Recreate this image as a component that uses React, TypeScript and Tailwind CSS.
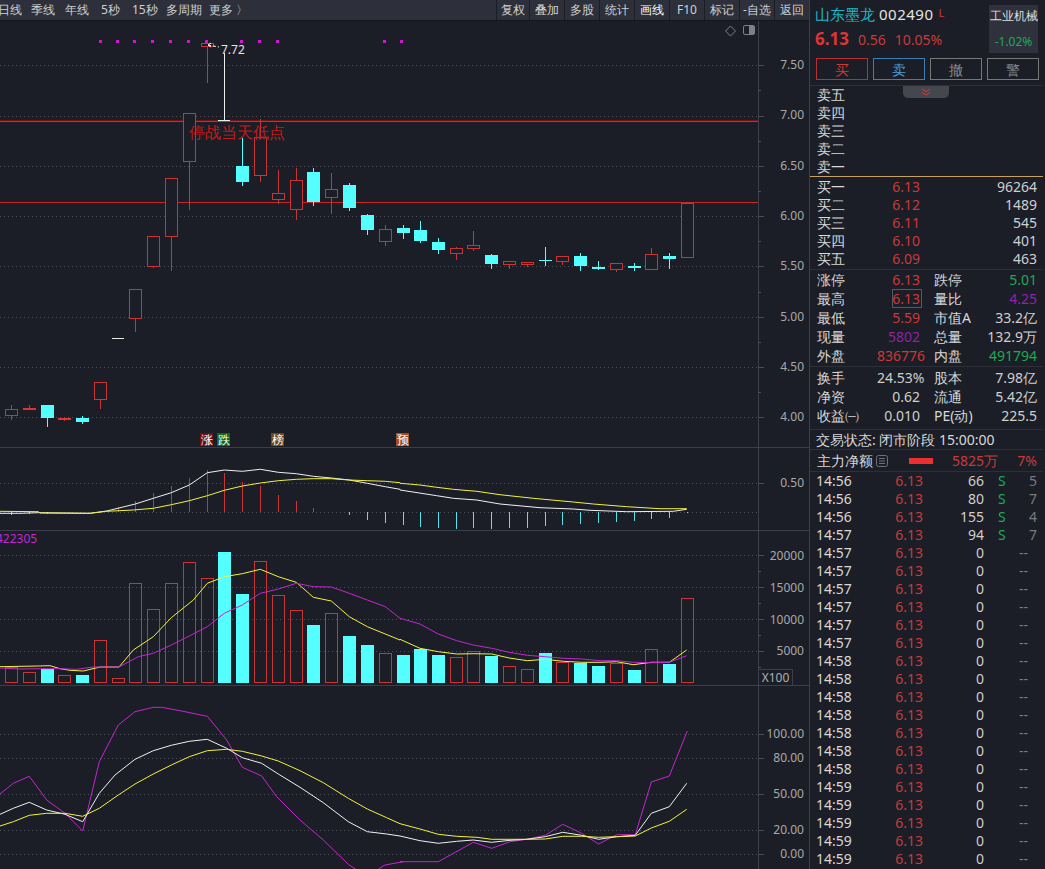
import React from "react";

type P = number[];
const pts = (a: P, ox: number, oy: number) => {
  const o: string[] = [];
  for (let i = 0; i < a.length; i += 2) o.push(`${(ox + a[i] / 3).toFixed(1)},${(oy + a[i + 1] / 3).toFixed(1)}`);
  return o.join(" ");
};
const join2 = (a: P, b: P, y: number, ax = 0) => pts(a, ax, y) + " " + pts(b, 400, y);

const RED = "#c93434";
const CYAN = "#54ffff";
const YEL = "#f2f23c";
const MAG = "#c426cf";

// x, high, bodyTop, bodyBottom, low, kind
const candles: [number, number, number, number, number, string][] = [
  [11, 405, 409, 416, 420, "r"], [29, 405, 408, 410, 410, "f"], [47, 405, 405, 418, 427, "c"], [64, 417, 418, 420, 421, "f"],
  [82, 416, 418, 422, 424, "c"], [100, 382, 382, 400, 409, "r"], [135, 289, 289, 319, 332, "r"], [153, 236, 236, 267, 268, "r"],
  [171, 178, 178, 237, 271, "r"], [189, 113, 113, 162, 210, "r"], [207, 43, 43, 47, 83, "r"], [242, 138, 166, 182, 186, "c"],
  [260, 119, 137, 176, 182, "r"], [278, 170, 193, 200, 204, "r"], [296, 168, 180, 210, 220, "r"], [313, 168, 172, 202, 206, "c"],
  [331, 173, 189, 198, 214, "r"], [349, 183, 185, 208, 211, "c"], [367, 214, 215, 230, 235, "c"], [385, 225, 229, 242, 246, "r"],
  [403, 225, 228, 233, 239, "c"], [420, 221, 230, 241, 243, "c"], [438, 238, 242, 250, 254, "c"], [456, 247, 248, 254, 260, "r"],
  [473, 231, 245, 249, 251, "r"], [491, 254, 255, 264, 269, "c"], [509, 261, 261, 265, 269, "r"], [527, 262, 262, 265, 267, "r"],
  [545, 247, 260, 261, 266, "c"], [562, 256, 256, 262, 265, "r"], [580, 253, 256, 266, 271, "c"], [598, 261, 267, 269, 270, "c"],
  [616, 263, 263, 270, 272, "r"], [634, 263, 266, 268, 271, "c"], [651, 248, 254, 270, 270, "r"], [669, 253, 256, 259, 269, "c"],
  [687, 203, 203, 258, 258, "r"],
];

const vol: [number, number, string][] = [
  [11, 712, "r"], [29, 727, "r"], [47, 717, "c"], [64, 736, "r"], [82, 735, "c"], [100, 631, "r"], [118, 745, "r"], [135, 460, "r"],
  [153, 538, "r"], [171, 460, "r"], [189, 397, "r"], [207, 445, "r"], [224, 366, "c"], [242, 492, "c"], [260, 394, "r"], [278, 496, "r"],
  [296, 541, "r"], [313, 585, "c"], [331, 550, "r"], [349, 618, "c"], [367, 645, "c"], [385, 670, "r"], [403, 675, "c"], [420, 657, "c"],
  [438, 675, "c"], [456, 680, "r"], [473, 664, "r"], [491, 678, "c"], [509, 709, "r"], [527, 718, "r"], [545, 669, "c"], [562, 695, "r"],
  [580, 699, "c"], [598, 708, "c"], [616, 700, "r"], [634, 720, "c"], [651, 658, "r"], [669, 702, "c"], [687, 505, "r"],
];

const macd: [number, number][] = [
  [118, 507], [135, 501], [153, 493], [171, 486], [189, 478], [207, 470], [224, 473], [242, 482], [260, 486], [278, 495], [296, 501], [313, 508], [331, 512],
  [349, 515], [367, 520], [385, 523], [403, 525], [420, 527], [438, 528], [456, 529], [473, 528], [491, 529], [509, 528], [527, 528], [545, 526], [562, 525],
  [580, 524], [598, 523], [616, 522], [634, 521], [651, 519], [669, 518], [687, 513], [11, 515], [29, 514], [47, 514],
];

const Grid = ({ ys }: { ys: number[] }) => (
  <>
    {ys.map((y) => (
      <line key={y} x1={0} x2={758} y1={y + 0.5} y2={y + 0.5} stroke="#4c4f58" strokeDasharray="1 3" />
    ))}
    {ys.map((y) => (
      <line key={"t" + y} x1={758} x2={764} y1={y + 0.5} y2={y + 0.5} stroke="#4a4d58" />
    ))}
  </>
);

const Minor = ({ ys }: { ys: number[] }) => (
  <>
    {ys.map((y) => (
      <line key={y} x1={758} x2={761} y1={y + 0.5} y2={y + 0.5} stroke="#4a4d58" />
    ))}
  </>
);

const Line = ({ p, c }: { p: string; c: string }) => <polyline points={p} fill="none" stroke={c} strokeWidth={1} />;

const Panel = ({ top, h, border = true, children }: { top: number; h: number; border?: boolean; children: React.ReactNode }) => (
  <div className={`relative w-full shrink-0 overflow-hidden ${border ? "border-b border-[#3c3f4a]" : ""}`} style={{ height: h }}>
    <div className="absolute left-[758px] top-0 bottom-0 w-px bg-[#3c3f4a]" />
    <svg className="absolute left-0 top-0" width={809} height={h} viewBox={`0 ${top} 809 ${h}`}>
      {children}
    </svg>
  </div>
);

const Ax = ({ y, t }: { y: number; t: string }) => (
  <div className="absolute right-[5px] h-4 text-[12px] leading-4 text-[#a9a9a9]" style={{ top: y - 7 }}>
    {t}
  </div>
);

const Mark = ({ x, t, c }: { x: number; t: string; c: string }) => (
  <div className={`absolute top-[412px] flex h-[13px] w-[13px] items-center justify-center text-[12px] leading-none text-white ${c}`} style={{ left: x }}>
    {t}
  </div>
);

const Tool = ({ t, w, bright }: { t: string; w: string; bright?: boolean }) => (
  <div className={`flex h-full items-center justify-center border-l border-[#1b1e26] text-[12px] ${w} ${bright ? "text-white" : "text-[#d0d0d0]"}`}>{t}</div>
);

const Act = ({ t, c }: { t: string; c: string }) => (
  <div className={`flex h-[22px] w-[52px] items-center justify-center border text-[14px] ${c}`}>{t}</div>
);

const Book = ({ l, p, v }: { l: string; p?: string; v?: string }) => (
  <div className="flex h-[18px] items-center text-[14px] leading-none">
    <span className="w-[60px] text-[#d8d8d8]">{l}</span>
    <span className="w-[43px] text-right text-[#c93a3a]">{p}</span>
    <span className="w-[117px] text-right text-[#cfcfcf]">{v}</span>
  </div>
);

const Stat = ({ a, b, ac = "text-[#c93a3a]", c, d, dc = "text-[#cfcfcf]", boxed }: { a: string; b: string; ac?: string; c: string; d: string; dc?: string; boxed?: boolean }) => (
  <div className="relative flex h-[19px] items-center text-[14px] leading-none">
    <span className="w-[60px] text-[#d8d8d8]">{a}</span>
    <span className={`w-[43px] text-right ${ac}`}>{b}</span>
    {boxed && <div className="absolute left-[75px] top-0 h-[19px] w-[30px] border border-[#555965]" />}
    <span className="ml-[14px] w-[50px] text-[#d8d8d8]">{c}</span>
    <span className={`w-[53px] text-right ${dc}`}>{d}</span>
  </div>
);

const times: string[][] = [
  ["14:56", "66", "S", "5"], ["14:56", "80", "S", "7"], ["14:56", "155", "S", "4"], ["14:57", "94", "S", "7"],
  ...[...Array(6).fill("14:57"), ...Array(7).fill("14:58"), ...Array(5).fill("14:59")].map((t: string) => [t, "0", "", "--"]),
];

export default function App() {
  return (
    <div className="flex h-[869px] w-[1045px] overflow-hidden bg-[#1b1e26] font-['Noto_Sans','Noto_Sans_CJK_SC',sans-serif] text-[12px]">
      <div className="flex w-[810px] shrink-0 flex-col border-r border-[#3c3f4a]">
        <div className="flex h-[21px] shrink-0 items-center justify-between border-b border-[#14161b] bg-[#2d303b] text-[#d0d0d0]">
          <div className="relative h-full w-[300px]">
            {[["日线", -2], ["季线", 31], ["年线", 65], ["5秒", 101], ["15秒", 132], ["多周期", 166], ["更多", 209], ["〉", 236]].map(([t, x]) => (
              <span key={t as string} className="absolute top-[1px] leading-[18px]" style={{ left: x as number }}>
                {t}
              </span>
            ))}
          </div>
          <div className="flex h-full">
            <Tool t="复权" w="w-[33px]" />
            <Tool t="叠加" w="w-[35px]" />
            <Tool t="多股" w="w-[35px]" />
            <Tool t="统计" w="w-[35px]" />
            <Tool t="画线" w="w-[35px]" bright />
            <Tool t="F10" w="w-[35px]" />
            <Tool t="标记" w="w-[35px]" />
            <Tool t="-自选" w="w-[35px]" />
            <Tool t="返回" w="w-[35px]" />
          </div>
        </div>

        <Panel top={21} h={427}>
          <Grid ys={[65, 116, 166, 216, 266, 317, 367, 417]} />
          <Minor ys={[90, 141, 191, 241, 292, 342, 392]} />
          <rect x={0} y={120} width={758} height={1} fill="#7a0f0f" />
          <rect x={0} y={121} width={758} height={1} fill="#d32a2a" />
          <rect x={0} y={202} width={758} height={1} fill="#c92424" />
          {[100, 117, 134, 152, 170, 188, 206, 241, 259, 277, 384, 401].map((x) => (
            <rect key={x} x={x - 1} y={40} width={3} height={3} fill="#d414d4" />
          ))}
          <g shapeRendering="crispEdges">
            {candles.map(([x, hi, t, b, lo, k]) => {
              const col = k === "c" ? CYAN : RED;
              return (
                <g key={x}>
                  <line x1={x + 0.5} x2={x + 0.5} y1={hi} y2={lo} stroke={col} />
                  {k === "r" ? (
                    <rect x={x - 5.5} y={t + 0.5} width={12} height={b - t - 1} fill="#1b1e26" stroke={col} />
                  ) : (
                    <rect x={x - 6} y={t} width={13} height={b - t} fill={k === "c" ? CYAN : "#e03434"} />
                  )}
                </g>
              );
            })}
            <line x1={112} x2={124} y1={338.5} y2={338.5} stroke="#e8e8e8" />
            <line x1={224.5} x2={224.5} y1={53} y2={120} stroke="#eeeeee" />
            <line x1={218} x2={230} y1={120.5} y2={120.5} stroke="#eeeeee" />
          </g>
          <path d="M211 43 L208 45 L211 47" fill="none" stroke="#fff" />
          <line x1={208} y1={45} x2={219} y2={47} stroke="#fff" strokeDasharray="3 2" />
        </Panel>
        <div className="pointer-events-none absolute left-0 top-0 h-[869px] w-[809px]">
          <span className="absolute left-[221px] top-[42px] text-[12px] leading-4 text-[#e4e4e4]">7.72</span>
          <span className="absolute left-[189px] top-[120px] text-[16px] leading-6 text-[#c21a1a]">停战当天低点</span>
          <span className="absolute left-[-4px] top-[531px] text-[12px] leading-4 text-[#c426cf]">422305</span>
          {[["7.50", 64], ["7.00", 114], ["6.50", 165], ["6.00", 215], ["5.50", 265], ["5.00", 316], ["4.50", 366], ["4.00", 416], ["0.50", 482], ["20000", 555], ["15000", 587], ["10000", 619], ["5000", 650], ["100.00", 733], ["80.00", 757], ["50.00", 793], ["20.00", 829], ["0.00", 853]].map(([t, y]) => (
            <Ax key={t as string} t={t as string} y={y as number} />
          ))}
          <div className="absolute left-[758px] top-[669px] flex h-[17px] w-[35px] items-center justify-center border border-[#3c3f4a] text-[12px] text-[#b0b0b0]">X100</div>
          <div className="absolute left-0 top-[21px]">
            <Mark x={200} t="涨" c="bg-[#6e0f14]" />
            <Mark x={217} t="跌" c="bg-[#0e6a1c]" />
            <Mark x={271} t="榜" c="bg-[#744615]" />
            <Mark x={396} t="预" c="bg-[#a34e1e]" />
          </div>
          <svg className="absolute left-[725px] top-[24px]" width={32} height={14} viewBox="0 0 32 14">
            <path d="M5 2 L10 7 L5 12 L0 7 Z" fill="none" stroke="#7d808a" transform="translate(0.5 0)" />
            <rect x={18.5} y={1.5} width={11} height={9} rx={1.5} fill="none" stroke="#7d808a" />
            <rect x={24} y={2} width={5} height={8} fill="#7d808a" />
          </svg>
        </div>

        <Panel top={448} h={83}>
          <line x1={0} x2={758} y1={512.5} y2={512.5} stroke="#4c4f58" strokeDasharray="1 3" />
          <line x1={758} x2={764} y1={483.5} y2={483.5} stroke="#4a4d58" />
          <line x1={0} x2={758} y1={483.5} y2={483.5} stroke="#4c4f58" strokeDasharray="1 3" />
          <g shapeRendering="crispEdges">
            {macd.map(([x, y]) => (
              <line key={x} x1={x + 0.5} x2={x + 0.5} y1={512} y2={y} stroke={y < 512 ? RED : "#54e4e8"} />
            ))}
          </g>
          <Line c="#f0f0f0" p={join2([0, 250, 60, 250, 115, 248, 270, 250, 320, 243, 406, 222, 460, 205, 514, 188, 568, 165, 622, 128, 673, 120, 727, 124, 781, 118, 835, 127, 889, 131, 940, 139, 994, 144, 1048, 150, 1102, 160, 1156, 170, 1200, 178], [0, 180, 110, 197, 160, 205, 230, 210, 300, 222, 420, 233, 520, 237, 570, 241, 680, 245, 820, 244, 860, 238], 430)} />
          <Line c={YEL} p={join2([0, 244, 115, 245, 120, 249, 270, 250, 320, 244, 400, 240, 460, 235, 514, 224, 568, 212, 622, 197, 673, 181, 727, 168, 781, 159, 835, 152, 889, 148, 940, 146, 994, 146, 1048, 150, 1102, 152, 1156, 154, 1200, 158], [0, 160, 60, 165, 110, 172, 160, 178, 230, 184, 300, 194, 400, 205, 520, 216, 580, 222, 680, 230, 780, 236, 860, 236], 430)} />
        </Panel>

        <Panel top={531} h={155}>
          <Grid ys={[555, 587, 619, 651]} />
          <Minor ys={[571, 603, 635, 667]} />
          <g shapeRendering="crispEdges">
            {vol.map(([x, v, k]) => {
              const t = Math.round(430 + v / 3);
              return k === "c" ? (
                <rect key={x} x={x - 6} y={t} width={13} height={683 - t} fill={CYAN} />
              ) : (
                <rect key={x} x={x - 5.5} y={t + 0.5} width={12} height={683 - t - 1} fill="none" stroke={RED} />
              );
            })}
          </g>
          <Line c={YEL} p={join2([0, 710, 115, 708, 150, 707, 180, 716, 210, 721, 250, 723, 300, 711, 357, 711, 400, 660, 460, 620, 514, 563, 580, 510, 622, 460, 673, 440, 727, 431, 781, 418, 835, 440, 889, 457, 940, 502, 994, 513, 1048, 560, 1102, 590, 1156, 612, 1200, 630], [0, 628, 60, 655, 115, 665, 170, 672, 220, 671, 275, 672, 328, 684, 382, 692, 436, 688, 490, 694, 545, 697, 600, 697, 650, 695, 700, 704, 754, 697, 808, 697, 860, 660], 430)} />
          <Line c={MAG} p={join2([0, 714, 60, 717, 120, 716, 180, 716, 230, 718, 280, 711, 357, 711, 415, 680, 460, 670, 514, 645, 568, 618, 622, 590, 673, 550, 727, 525, 781, 490, 835, 477, 889, 460, 940, 470, 994, 471, 1048, 490, 1102, 510, 1156, 530, 1200, 565], [0, 565, 60, 582, 115, 612, 170, 632, 220, 645, 275, 655, 328, 667, 382, 676, 436, 680, 490, 685, 545, 687, 600, 692, 650, 692, 700, 697, 754, 698, 808, 697, 860, 677], 430)} />
        </Panel>

        <Panel top={686} h={183} border={false}>
          <Grid ys={[734, 758, 794, 830, 854]} />
          <Line c={MAG} p={pts([0, 342, 40, 310, 88, 289, 140, 360, 195, 400, 248, 453, 298, 245, 355, 135, 405, 95, 460, 82, 485, 82, 540, 92, 622, 109, 680, 180, 727, 262, 785, 288, 830, 350, 900, 420, 970, 480, 1045, 553, 1100, 590, 1115, 590, 1135, 567, 1155, 555, 1210, 545], 0, 680) + " " + pts([0, 545, 115, 545, 220, 487, 275, 505, 330, 485, 380, 478, 436, 466, 488, 433, 545, 460, 596, 492, 650, 464, 706, 464, 754, 306, 808, 288, 862, 153], 400, 680)} />
          <Line c="#f0f0f0" p={pts([0, 403, 40, 385, 88, 367, 140, 390, 195, 403, 248, 425, 298, 340, 345, 285, 405, 238, 460, 212, 514, 196, 568, 184, 622, 178, 680, 205, 727, 233, 785, 250, 835, 282, 900, 322, 970, 368, 1045, 425, 1102, 455, 1160, 462], 0, 680) + " " + pts([0, 468, 60, 482, 115, 490, 170, 484, 220, 480, 275, 487, 330, 481, 380, 478, 436, 470, 488, 457, 545, 466, 596, 478, 650, 470, 706, 466, 754, 400, 808, 380, 860, 310], 400, 680)} />
          <Line c={YEL} p={pts([0, 438, 40, 425, 88, 406, 140, 400, 195, 400, 248, 409, 298, 385, 355, 345, 405, 312, 460, 282, 514, 255, 568, 230, 622, 212, 680, 208, 727, 214, 785, 228, 835, 243, 900, 272, 970, 308, 1045, 355, 1102, 387, 1160, 413], 0, 680) + " " + pts([0, 431, 60, 447, 115, 463, 170, 469, 230, 472, 275, 478, 330, 478, 380, 478, 436, 477, 488, 469, 545, 469, 596, 472, 650, 470, 706, 468, 754, 444, 808, 424, 860, 388], 400, 680)} />
        </Panel>
      </div>

      <div className="w-[235px] shrink-0 text-[14px]">
        <div className="w-[233px] border-b border-[#2c2f38]">
          <div className="relative h-[85px]">
            <div className="absolute left-[5px] top-[4px] flex items-baseline leading-5">
              <span className="text-[15px] text-[#1fb6c6]">山东墨龙</span>
              <span className="ml-[4px] text-[15px] tracking-[0.5px] text-[#e4e4e4]">002490</span>
              <span className="ml-[5px] -translate-y-[3px] text-[11px] text-[#c93a3a]">L</span>
            </div>
            <div className="absolute left-[5px] top-[29px] flex items-baseline leading-5">
              <span className="text-[17px] font-bold text-[#d93636]">6.13</span>
              <span className="ml-[9px] text-[14px] text-[#c93a3a]">0.56</span>
              <span className="ml-[9px] text-[14px] text-[#c93a3a]">10.05%</span>
            </div>
            <div className="absolute left-[179px] top-[5px] flex h-[48px] w-[49px] flex-col items-center justify-between bg-[#2f323d] pb-[1px] pt-[3px]">
              <span className="whitespace-nowrap text-[12px] leading-4 text-[#dedede]">工业机械</span>
              <span className="text-[12px] leading-5 text-[#1fa957]">-1.02%</span>
            </div>
            <div className="absolute left-[6px] top-[58px] flex gap-[5px]">
              <Act t="买" c="border-[#b83030] text-[#c83c3c]" />
              <Act t="卖" c="border-[#3a7fb5] text-[#4f9fd4]" />
              <Act t="撤" c="border-[#777] text-[#8a8a8a]" />
              <Act t="警" c="border-[#777] text-[#8a8a8a]" />
            </div>
          </div>
        </div>
        <div className="relative w-[233px] border-b border-[#c9a15e] pl-[7px]">
          <div className="absolute left-[93px] top-0 z-10 flex h-[12px] w-[46px] items-center justify-center rounded-b-[5px] bg-[#45474e]">
            <svg width={12} height={9} viewBox="0 0 12 9" fill="none" stroke="#d83a3a">
              <path d="M2 1 L6 3.5 L10 1" />
              <path d="M2 4.5 L6 7 L10 4.5" />
            </svg>
          </div>
          {["卖五", "卖四", "卖三", "卖二", "卖一"].map((l) => (
            <Book key={l} l={l} />
          ))}
        </div>
        <div className="w-[233px] border-b border-[#2c2f38] pb-[1px] pl-[7px] pt-[1px]">
          <Book l="买一" p="6.13" v="96264" />
          <Book l="买二" p="6.12" v="1489" />
          <Book l="买三" p="6.11" v="545" />
          <Book l="买四" p="6.10" v="401" />
          <Book l="买五" p="6.09" v="463" />
        </div>
        <div className="w-[233px] border-b border-[#2c2f38] pb-[1px] pl-[7px]">
          <Stat a="涨停" b="6.13" c="跌停" d="5.01" dc="text-[#1fa957]" />
          <Stat a="最高" b="6.13" c="量比" d="4.25" dc="text-[#9a1fa8]" boxed />
          <Stat a="最低" b="5.59" c="市值A" d="33.2亿" />
          <Stat a="现量" b="5802" ac="text-[#8f22a5]" c="总量" d="132.9万" />
          <Stat a="外盘" b="836776" c="内盘" d="491794" dc="text-[#1fa957]" />
        </div>
        <div className="h-[63px] w-[233px] border-b border-[#2c2f38] pl-[7px] pt-[1px]">
          <Stat a="换手" b="24.53%" ac="text-[#cfcfcf]" c="股本" d="7.98亿" />
          <Stat a="净资" b="0.62" ac="text-[#cfcfcf]" c="流通" d="5.42亿" />
          <Stat a="收益㈠" b="0.010" ac="text-[#cfcfcf]" c="PE(动)" d="225.5" />
        </div>
        <div className="flex h-[20px] w-[233px] items-center border-b border-[#2c2f38] pl-[6px] text-[14px] leading-none text-[#d8d8d8]">
          交易状态: 闭市阶段 15:00:00
        </div>
        <div className="flex h-[22px] w-[233px] items-center border-b border-[#2c2f38] pl-[7px] text-[14px] leading-none">
          <span className="text-[#d8d8d8]">主力净额</span>
          <svg className="ml-[3px]" width={12} height={12} viewBox="0 0 12 12" fill="none" stroke="#6d707a">
            <rect x={0.5} y={0.5} width={11} height={11} rx={2} />
            <path d="M3 3.5H9M3 6H9M3 8.5H9" />
          </svg>
          <div className="ml-[21px] h-[6px] w-[24px] bg-[#ee2f2f]" />
          <span className="w-[65px] text-right text-[#c93a3a]">5825万</span>
          <span className="w-[39px] text-right text-[#c93a3a]">7%</span>
        </div>
        <div className="pl-[6px]">
          {times.map((r, i) => (
            <div key={i} className="flex h-[18px] items-center text-[14px] leading-none">
              <span className="w-[50px] text-[#d8d8d8]">{r[0]}</span>
              <span className="w-[57px] text-right text-[#c93a3a]">6.13</span>
              <span className="w-[61px] text-right text-[#cfcfcf]">{r[1]}</span>
              <span className="w-[22px] pl-[14px] text-[#1fa957]">{r[2]}</span>
              <span className={`w-[31px] text-right text-[#7a7a7a] ${r[3] === "--" ? "pr-[9px]" : ""}`}>{r[3]}</span>
            </div>
          ))}
        </div>
      </div>
    </div>
  );
}
